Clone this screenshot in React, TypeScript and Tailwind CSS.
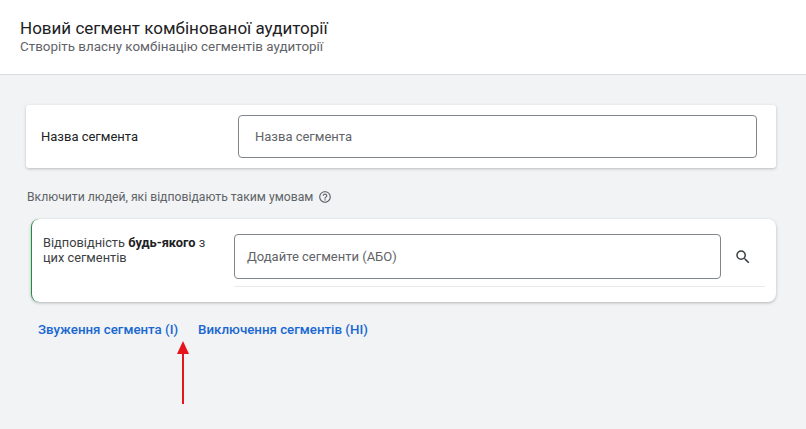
export default function App() {
  return (
    <div className="w-[806px] h-[429px] bg-[#f1f3f4] relative overflow-hidden" style={{ fontFamily: 'Roboto, "Liberation Sans", sans-serif' }}>
      <div className="h-[75px] bg-white border-b border-[#dadce0] pl-[20px] pt-[17px]">
        <div className="text-[17px] leading-[22px] text-[#202124]">Новий сегмент комбінованої аудиторії</div>
        <div className="text-[13.4px] leading-[16px] text-[#5f6368]">Створіть власну комбінацію сегментів аудиторії</div>
      </div>
      <div className="pl-[26px] pr-[30px] pt-[30px]">
        <div className="bg-white rounded-[3px] shadow-[0_1px_3px_rgba(60,64,67,0.3)] h-[63px] flex items-center pl-[15px] pr-[19px]">
          <div className="w-[197px] text-[13px] text-[#202124]">Назва сегмента</div>
          <div className="flex-1 h-[43px] border border-[#80868b] rounded-[4px] flex items-center px-[16px] text-[13px] text-[#5f6368]">Назва сегмента</div>
        </div>
        <div className="mt-[20px] flex items-center gap-[5px] text-[12.2px] text-[#5f6368] pl-[1px]">
          Включити людей, які відповідають таким умовам
          <svg width="14" height="14" viewBox="0 0 24 24" fill="#5f6368"><path d="M11 18h2v-2h-2v2zm1-16C6.48 2 2 6.48 2 12s4.48 10 10 10 10-4.48 10-10S17.52 2 12 2zm0 18c-4.41 0-8-3.59-8-8s3.59-8 8-8 8 3.59 8 8-3.59 8-8 8zm0-14c-2.21 0-4 1.79-4 4h2c0-1.1.9-2 2-2s2 .9 2 2c0 2-3 1.75-3 5h2c0-2.25 3-2.5 3-5 0-2.21-1.79-4-4-4z"/></svg>
        </div>
        <div className="ml-[5px] mt-[13px] bg-white rounded-[8px] border-l-[1.5px] border-[#1e8e3e] shadow-[0_1px_3px_rgba(60,64,67,0.35)] h-[83px] flex pl-[11px] pr-[11px] pt-[15px]">
          <div className="w-[191px] pr-[20px] text-[12.8px] leading-[15px] text-[#3c4043] pt-[1px]">Відповідність <b className="text-[#202124]">будь-якого</b> з цих сегментів</div>
          <div className="flex-1">
            <div className="flex items-center">
              <div className="flex-1 h-[45px] border border-[#80868b] rounded-[4px] flex items-center px-[12px] text-[13px] text-[#5f6368]">Додайте сегменти (АБО)</div>
              <div className="w-[44px] flex justify-center">
                <svg width="18" height="18" viewBox="0 0 24 24" fill="#3c4043"><path d="M15.5 14h-.79l-.28-.27A6.471 6.471 0 0016 9.5 6.5 6.5 0 109.5 16c1.61 0 3.09-.59 4.23-1.57l.27.28v.79l5 4.99L20.49 19l-4.99-5zm-6 0C7.01 14 5 11.99 5 9.5S7.01 5 9.5 5 14 7.01 14 9.5 11.99 14 9.5 14z"/></svg>
              </div>
            </div>
            <div className="mt-[7px] border-b border-[#e8eaed]"></div>
          </div>
        </div>
        <div className="mt-[18px] pl-[12px] flex gap-[20px] text-[13.3px] font-medium text-[#1967d2]">
          <span>Звуження сегмента (І)</span>
          <span>Виключення сегментів (НІ)</span>
        </div>
      </div>
      <svg className="absolute left-[176px] top-[341px]" width="14" height="64" viewBox="0 0 14 64">
        <line x1="7" y1="10" x2="7" y2="63" stroke="#e8141b" strokeWidth="2" />
        <polygon points="7,0 1,13 13,13" fill="#e8141b" />
      </svg>
    </div>
  );
}
